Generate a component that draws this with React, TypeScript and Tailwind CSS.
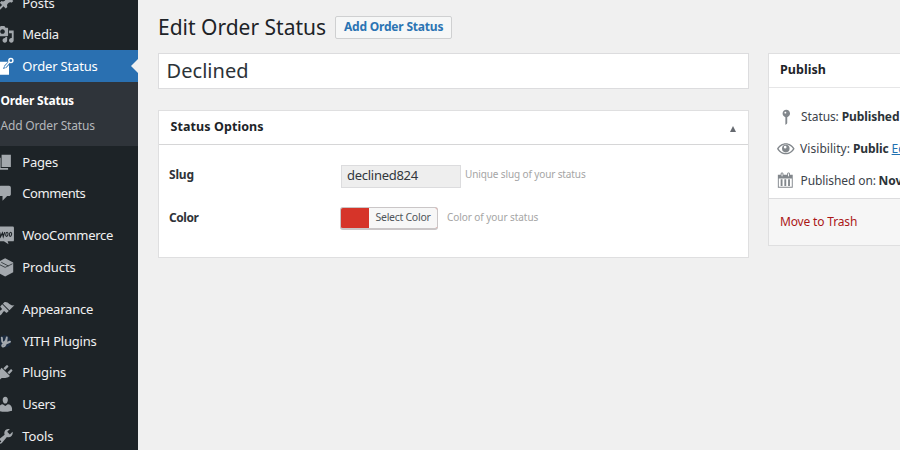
import type { ReactNode } from "react";

function Icon({ children, className = "" }: { children: ReactNode; className?: string }) {
  return (
    <svg viewBox="0 0 20 20" fill="currentColor" className={"shrink-0 " + className}>
      {children}
    </svg>
  );
}

const icons = {
  posts: <path d="M10.44 3.02l1.82-1.82 6.36 6.35-1.83 1.82c-1.05-.68-2.48-.57-3.41.36l-.75.75c-.92.93-1.04 2.35-.35 3.41l-1.83 1.82-2.41-2.41-2.8 2.79c-.42.42-3.38 2.71-3.8 2.29s1.86-3.39 2.28-3.81l2.79-2.79L4.1 9.36l1.83-1.82c1.05.69 2.48.57 3.4-.36l.75-.75c.93-.92 1.05-2.35.36-3.41z" />,
  media: <path d="M13 11V4c0-.55-.45-1-1-1h-1.67L9 1H5L3.67 3H2c-.55 0-1 .45-1 1v7c0 .55.45 1 1 1h10c.55 0 1-.45 1-1zM7 4.5c1.38 0 2.5 1.12 2.5 2.5S8.38 9.5 7 9.5 4.5 8.38 4.5 7 5.62 4.5 7 4.5zM14 6h5v10.5c0 1.38-1.12 2.5-2.5 2.5S14 17.88 14 16.5s1.12-2.5 2.5-2.5c.17 0 .34.02.5.05V9h-3V6zm-4 8.05V13h2v3.5c0 1.38-1.12 2.5-2.5 2.5S7 17.88 7 16.5 8.12 14 9.5 14c.17 0 .34.02.5.05z" />,
  order: (
    <>
      <path d="M1 5h12L9 9.200l-1.500 3.600 3.700-1.300L14 8.500V19.200H1z" />
      <path d="M9.300 11.200l5.200-5.800" fill="none" stroke="currentColor" strokeWidth="1.500" />
      <circle cx="16" cy="3.800" r="2.200" fill="none" stroke="currentColor" strokeWidth="1.500" />
    </>
  ),
  pages: <path d="M6 15V2h10v13H6zm-1 1h8v2H3V5h2v11z" />,
  comments: <path d="M5 2h9c1.1 0 2 .9 2 2v7c0 1.1-.9 2-2 2h-2l-5 5v-5H5c-1.1 0-2-.9-2-2V4c0-1.1.9-2 2-2z" />,
  woo: (
    <>
      <path d="M-5 .5h23a1.300 1.300 0 0 1 1.300 1.300v13.400a1.300 1.300 0 0 1-1.300 1.300h-5.500l1 3-5-3H-5z" />
      <path d="M4 6.800l.9 4.600 2-3.800.9 3.800 1.600-4.800" fill="none" stroke="#1d2327" strokeWidth="1.300" />
      <ellipse cx="11.700" cy="9" rx="1.200" ry="2.200" transform="rotate(14 11.700 9)" fill="none" stroke="#1d2327" strokeWidth="1.100" />
      <ellipse cx="15.600" cy="9" rx="1.200" ry="2.200" transform="rotate(14 15.600 9)" fill="none" stroke="#1d2327" strokeWidth="1.100" />
    </>
  ),
  products: (
    <>
      <path d="M9.800.4l8.700 4.500v10.300l-8.700 4.600-8.700-4.600V4.900z" />
      <path d="M2 6.200l7.800 3.900 8-3.900M5.600 4.600l7.800 4" fill="none" stroke="#1d2327" strokeWidth=".8" />
    </>
  ),
  appearance: (
    <path d="M14.480 11.060L7.410 3.990l1.500-1.500c.5-.56 2.300-.47 3.510.32 1.210.8 1.430 1.280 2.910 2.100 1.180.64 2.450 1.260 4.450.85zm-.71.71L6.700 4.700 4.930 6.470c-.39.39-.39 1.020 0 1.410l1.060 1.060c.39.39.39 1.030 0 1.420-.6.6-1.430 1.110-2.210 1.690-.35.26-.7.53-1.010.84C1.430 14.230.4 16.080 1.400 17.070c.99 1 2.840-.03 4.180-1.360.31-.31.58-.66.85-1.020.57-.78 1.080-1.610 1.690-2.210.39-.39 1.020-.39 1.410 0l1.060 1.060c.39.39 1.020.39 1.410 0z" />
  ),
  yith: (
    <>
      <circle cx="9.500" cy="10.200" r="6.600" fill="#1d2c40" />
      <path d="M6.200 6c.8 2.600-.4 5.300 1.500 5.300S11 8.800 11.600 5.800M11.600 5.800c-.2 3.800-.8 9.800-3.700 9.800-1.700 0-1.700-2 .3-2.600 2.500-.7 4.600-1.200 6.900-2.600" fill="none" stroke="currentColor" strokeWidth="2" strokeLinecap="round" />
    </>
  ),
  plugins: <path d="M13.11 4.36L9.87 7.6 8 5.73l3.24-3.24c.35-.34 1.05-.2 1.56.32.52.51.66 1.21.31 1.55zm-8 1.77l.91-1.12 9.01 9.01-1.19.84c-.71.71-2.63 1.16-3.82 1.16H6.14L4.9 17.26c-.59.59-1.54.59-2.12 0-.59-.58-.59-1.53 0-2.12l1.24-1.24v-3.88c0-1.13.4-3.19 1.09-3.89zm7.26 3.97l3.24-3.24c.34-.35 1.04-.21 1.55.31.52.51.66 1.21.31 1.55l-3.24 3.25z" />,
  users: <path d="M10 9.25c-2.27 0-2.73-3.44-2.73-3.44C7 4.02 7.82 2 9.97 2c2.16 0 2.98 2.02 2.71 3.81 0 0-.41 3.44-2.68 3.44zm0 2.57L12.72 10c2.39 0 4.52 2.33 4.52 4.53v2.49s-3.65 1.13-7.24 1.13c-3.65 0-7.24-1.13-7.24-1.13v-2.49c0-2.25 1.94-4.48 4.47-4.48z" />,
  tools: <path d="M16.68 9.77c-1.34 1.34-3.3 1.67-4.95.99l-5.41 6.52c-.99.99-2.59.99-3.58 0s-.99-2.59 0-3.57l6.52-5.42c-.68-1.65-.35-3.61.99-4.95 1.28-1.28 3.12-1.62 4.72-1.06l-2.89 2.89 2.82 2.82 2.86-2.87c.53 1.58.18 3.39-1.08 4.65zM3.81 16.21c.4.39 1.04.39 1.43 0 .4-.4.4-1.04 0-1.43-.39-.4-1.03-.4-1.43 0-.39.39-.39 1.03 0 1.43z" />,
  status: <path d="M14 6c0 1.86-1.28 3.41-3 3.86V16c0 1-2 2-2 2V9.86c-1.72-.45-3-2-3-3.86 0-2.21 1.79-4 4-4s4 1.79 4 4zM8 5c0 .55.45 1 1 1s1-.45 1-1-.45-1-1-1-1 .45-1 1z" />,
  eye: (
    <>
      <path fillRule="evenodd" d="M10 3.700C5.900 3.700 2 6.200 0 10c2 3.800 5.900 6.300 10 6.300S18 13.800 20 10C18 6.200 14.100 3.700 10 3.700zM10 5.100c3.300 0 6.400 1.800 8.200 4.900-1.800 3.100-4.900 4.900-8.200 4.900S3.600 13.100 1.800 10C3.600 6.900 6.700 5.100 10 5.100z" />
      <path fillRule="evenodd" d="M10 5.500a4.300 4.300 0 1 0 0 8.600 4.300 4.300 0 0 0 0-8.600zM9.300 6.600a1.500 1.500 0 1 1 0 3 1.500 1.500 0 0 1 0-3z" />
    </>
  ),
  calendar: <path d="M15 4h3v14H2V4h3V3c0-.83.67-1.5 1.5-1.5S8 2.17 8 3v1h4V3c0-.83.67-1.5 1.5-1.5S15 2.17 15 3v1zM6 3v2.5c0 .28.22.5.5.5s.5-.22.5-.5V3c0-.28-.22-.5-.5-.5S6 2.72 6 3zm7 0v2.5c0 .28.22.5.5.5s.5-.22.5-.5V3c0-.28-.22-.5-.5-.5s-.5.22-.5.5zm4 14V8H3v9h14zM7 16V9H5v7h2zm4 0V9H9v7h2zm4 0V9h-2v7h2z" />,
};

function MenuItem({ icon, label, tracking, active = false }: { icon: ReactNode; label: string; tracking: string; active?: boolean }) {
  return (
    <li className={"relative flex h-[31.7px] shrink-0 items-center text-[13px] " + (active ? "bg-[#2a70b1] text-white" : "text-[#f0f0f1]")}>
      <Icon className={"-ml-[4px] mr-[7.700px] size-[18.6px] " + (active ? "text-white" : "text-[#a3a8ad]")}>{icon}</Icon>
      <span className={"mt-px " + tracking}>{label}</span>
      {active && <span className="absolute right-0 top-[8.500px] border-y-[7.500px] border-r-[7.500px] border-y-transparent border-r-[#f0f0f0]" />}
    </li>
  );
}

function Sidebar() {
  return (
    <nav className="h-[450px] w-[138px] shrink-0 overflow-hidden bg-[#1d2327]">
      <ul className="-mt-[12.900px] flex flex-col">
        <MenuItem icon={icons.posts} label="Posts" tracking="tracking-[-0.09px]" />
        <MenuItem icon={icons.media} label="Media" tracking="tracking-[-0.22px]" />
        <MenuItem icon={icons.order} label="Order Status" tracking="tracking-[-0.17px]" active />
        <li className="h-[63.900px] shrink-0 bg-[#2f343a] pt-[6px]">
          <ul className="text-xs leading-[25px]">
            <li className="pl-[0.500px] font-bold tracking-[-0.21px] text-white">Order Status</li>
            <li className="pl-[0.500px] tracking-[-0.17px] text-[#b4b7ba]">Add Order Status</li>
          </ul>
        </li>
        <MenuItem icon={icons.pages} label="Pages" tracking="tracking-[-0.22px]" />
        <MenuItem icon={icons.comments} label="Comments" tracking="tracking-[-0.45px]" />
        <li className="h-[10.300px]" />
        <MenuItem icon={icons.woo} label="WooCommerce" tracking="tracking-[-0.29px]" />
        <MenuItem icon={icons.products} label="Products" tracking="tracking-[-0.07px]" />
        <li className="h-[10.300px]" />
        <MenuItem icon={icons.appearance} label="Appearance" tracking="tracking-[-0.21px]" />
        <MenuItem icon={icons.yith} label="YITH Plugins" tracking="tracking-[-0.22px]" />
        <MenuItem icon={icons.plugins} label="Plugins" tracking="tracking-[-0.14px]" />
        <MenuItem icon={icons.users} label="Users" tracking="tracking-[-0.28px]" />
        <MenuItem icon={icons.tools} label="Tools" tracking="tracking-[-0.1px]" />
      </ul>
    </nav>
  );
}

function StatusOptions() {
  return (
    <section className="mt-[21px] h-[148px] border border-[#dfdfe0] bg-white">
      <header className="flex h-[34px] items-center justify-between border-b border-[#d6d6d7] pl-[11.500px] pr-[12.500px]">
        <h2 className="text-[12.5px] font-bold tracking-[0.08px] text-[#1d2327]">Status Options</h2>
        <span className="mt-[2px] border-x-[3.500px] border-b-[6px] border-x-transparent border-b-[#666a70]" />
      </header>
      <div className="mt-[19px] flex h-[24px] items-center pl-[10px]">
        <label className="-mt-[2px] w-[172px] text-xs font-bold tracking-[-0.16px] text-[#2f3338]">Slug</label>
        <div className="flex h-[23px] w-[120px] items-center border border-[#dcdcde] bg-[#eeeeee] pl-[5px] text-[13px] tracking-[-0.28px] text-[#32373c]">declined824</div>
        <span className="-mt-[4px] ml-[4px] text-[10px] tracking-[-0.12px] text-[#a5a5a5]">Unique slug of your status</span>
      </div>
      <div className="mt-[18px] flex h-[24px] items-center pl-[10px]">
        <label className="-mt-[1px] w-[171px] text-xs font-bold tracking-[-0.45px] text-[#2f3338]">Color</label>
        <button className="flex h-[23px] w-[98px] items-stretch overflow-hidden rounded-[3px] border border-b-2 border-[#cac6c7] bg-[#d63429]">
          <span className="w-[28px]" />
          <span className="flex flex-1 items-center bg-[#f7f7f7] pl-[6.500px] pt-px text-[10.500px] tracking-[-0.27px] text-[#50555a]">Select Color</span>
        </button>
        <span className="-mt-[2px] ml-[9px] text-[10px] tracking-[-0.06px] text-[#a5a5a5]">Color of your status</span>
      </div>
    </section>
  );
}

function PublishBox() {
  return (
    <section className="mt-[53px] h-[193px] w-[240px] shrink-0 border border-[#dfdfe0] bg-white text-xs text-[#3c434a]">
      <header className="flex h-[34px] items-center border-b border-[#e6e6e7] pl-[11px]">
        <h2 className="text-[12.5px] font-bold tracking-[0.05px] text-[#1d2327]">Publish</h2>
      </header>
      <div className="flex h-[110px] flex-col whitespace-nowrap pl-[8px] pt-[13px]">
        <div className="flex h-[31.700px] items-center">
          <Icon className="mr-[5.500px] size-[18.600px] text-[#82878c]">{icons.status}</Icon>
          <span className="tracking-[-0.11px]">Status:</span>
          <b className="ml-[3px] tracking-[-0.1px] text-[#2c3338]">Published</b>
        </div>
        <div className="flex h-[31.700px] items-center">
          <Icon className="mr-[5.500px] mt-px size-[17.600px] text-[#82878c]">{icons.eye}</Icon>
          <span className="tracking-[0.04px]">Visibility:</span>
          <b className="ml-[3px] tracking-[-0.1px] text-[#2c3338]">Public</b>
          <span className="ml-[3px] text-[#2271b1] underline">Edit</span>
        </div>
        <div className="flex h-[31.700px] items-center">
          <Icon className="-ml-px mr-[6px] size-[18.600px] text-[#82878c]">{icons.calendar}</Icon>
          <span className="mt-px tracking-[-0.1px]">Published on:</span>
          <b className="ml-[2.500px] mt-px text-[#2c3338]">Nov</b>
        </div>
      </div>
      <footer className="flex h-[47px] items-center border-t border-[#dcdcde] bg-[#f6f6f6] pl-[11px]">
        <span className="tracking-[-0.16px] text-[#ab1616]">Move to Trash</span>
      </footer>
    </section>
  );
}

export default function App() {
  return (
    <div className="flex h-[450px] w-[900px] overflow-hidden bg-[#f0f0f0] font-['Noto_Sans',sans-serif]">
      <Sidebar />
      <main className="flex min-w-0 flex-1 pl-[20px]">
        <div className="w-[591px] shrink-0">
          <div className="flex h-[53px] items-center">
            <h1 className="text-[21px] leading-[30px] text-[#1d2327]">Edit Order Status</h1>
            <a className="ml-[9px] mt-px flex h-[23px] w-[117px] items-center justify-center rounded-[2px] border border-[#cfd0d1] bg-[#f6f7f7] text-xs font-bold tracking-[-0.2px] text-[#2b74b3]">Add Order Status</a>
          </div>
          <div className="flex h-[36px] items-center border border-[#dcdcde] bg-white pl-[7.500px] text-[20px] tracking-[0.05px] text-[#2c3338]">Declined</div>
          <StatusOptions />
        </div>
        <div className="w-[19px] shrink-0" />
        <PublishBox />
      </main>
    </div>
  );
}
